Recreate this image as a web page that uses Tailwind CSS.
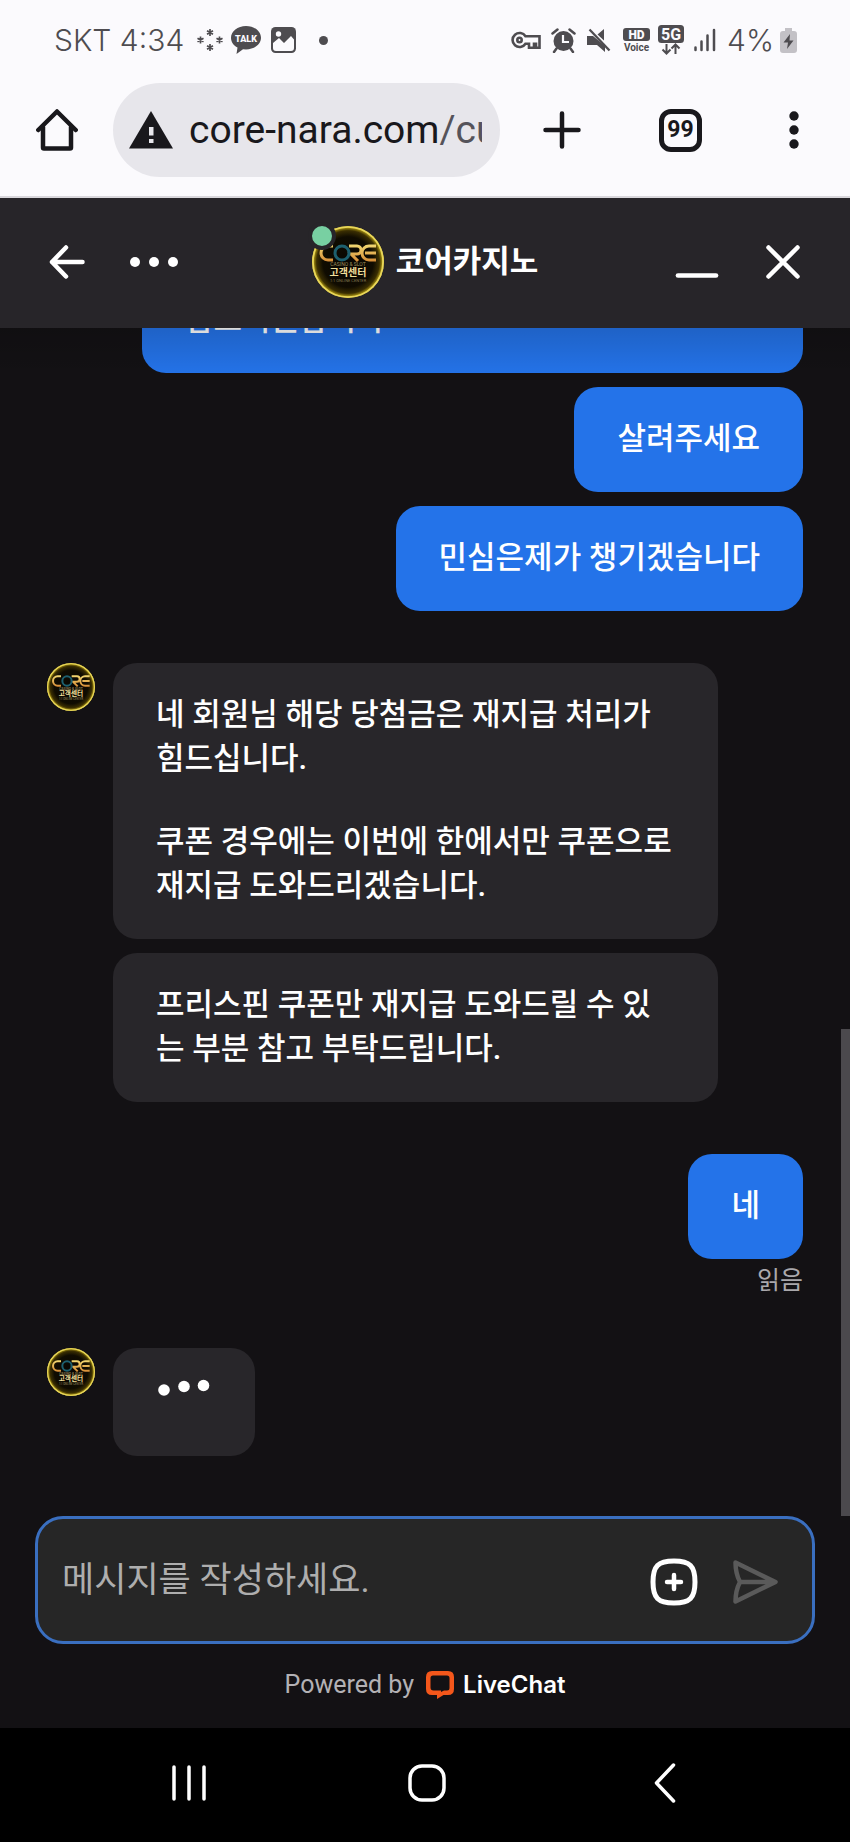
<!DOCTYPE html>
<html lang="ko">
<head>
<meta charset="utf-8">
<meta name="viewport" content="width=device-width, initial-scale=1">
<title>코어카지노 고객센터</title>
<script src="https://cdn.jsdelivr.net/npm/@tailwindcss/browser@4"></script>
</head>
<body class="bg-black font-['Roboto','Noto_Sans_CJK_KR',sans-serif]">

<!-- Shared brand emblem -->
<svg class="absolute h-0 w-0" aria-hidden="true">
  <defs>
    <radialGradient id="glow">
      <stop offset="0" stop-color="#080602"/>
      <stop offset="0.7" stop-color="#100c01"/>
      <stop offset="0.87" stop-color="#3a2e02"/>
      <stop offset="0.94" stop-color="#94800f"/>
      <stop offset="1" stop-color="#f0dc50"/>
    </radialGradient>
    <linearGradient id="gold" gradientUnits="userSpaceOnUse" x1="0" y1="18" x2="0" y2="36">
      <stop offset="0" stop-color="#f4dc74"/>
      <stop offset="1" stop-color="#d58a35"/>
    </linearGradient>
    <symbol id="emblem" viewBox="0 0 72 72">
      <circle cx="36" cy="36" r="36" fill="url(#glow)"/>
      <circle cx="36" cy="36" r="35" fill="none" stroke="#e9d75a" stroke-width="1.6"/>
      <g fill="none" stroke="url(#gold)" stroke-width="3">
        <path d="M21 20H16a7 7 0 0 0 0 14h5"/>
        <path d="M37 20h8a4 4 0 0 1 0 8h-6l7 7"/>
        <path d="M64 20h-7a7 7 0 0 0 0 14h7M53 27h11"/>
      </g>
      <circle cx="30" cy="27" r="7" fill="none" stroke="#1d5f6e" stroke-width="3"/>
      <text x="36" y="40" text-anchor="middle" font-family="Roboto" font-size="5" fill="#9c8c5c">CASINO &amp; SLOT</text>
      <text x="36" y="50" text-anchor="middle" font-family="Noto Sans CJK KR" font-weight="700" font-size="10" fill="#f1df9a">고객센터</text>
      <text x="36" y="56" text-anchor="middle" font-family="Roboto" font-size="4" fill="#83764f">1:1 ONLINE CENTER</text>
    </symbol>
  </defs>
</svg>

<div class="flex h-screen flex-col overflow-hidden bg-[#131114]">

  <!-- Phone status bar -->
  <div class="flex h-20 shrink-0 items-center justify-between bg-[#fbfafd] pr-[53px] pl-[54px] text-[#4e4c50]">
    <div class="flex items-center">
      <span class="font-['Inter'] text-[30px] font-light whitespace-nowrap">SKT 4:34</span>
      <svg class="ml-3 h-7 w-7" viewBox="0 0 28 28" fill="none" stroke="currentColor" stroke-width="1.7" aria-hidden="true">
        <path d="M14 3v7M11 4.800l6 3.400M17 4.800l-6 3.400M14 18v7M11 19.800l6 3.400M17 19.800l-6 3.400M4.500 10.500v7M1.500 12.300l6 3.400M7.500 12.300l-6 3.400M23.500 10.500v7M20.500 12.300l6 3.400M26.500 12.300l-6 3.400"/>
      </svg>
      <svg class="ml-[7px] h-7 w-[30px]" viewBox="0 0 30 28" aria-hidden="true">
        <path fill="currentColor" d="M15 0C6.700 0 0 5.200 0 11.800c0 4.200 2.600 7.700 6.500 9.800L5.500 28l6.500-4.800 3 .2c8.300 0 15-5 15-11.600S23.300 0 15 0z"/>
        <text x="15" y="16" text-anchor="middle" font-family="Roboto" font-weight="900" font-size="9" fill="#fbfafd">TALK</text>
      </svg>
      <svg class="ml-[10px] h-[26px] w-[25px]" viewBox="0 0 25 26" aria-hidden="true">
        <rect width="25" height="26" rx="4.500" fill="currentColor"/>
        <path fill="#fbfafd" d="M2 16l6-5 5 5 7-7 3 3.500V21q0 3-3 3H5q-3 0-3-3z"/>
        <circle cx="7.500" cy="7" r="2.700" fill="#fbfafd"/>
      </svg>
      <span class="ml-[23px] h-[9px] w-[9px] rounded-full bg-current"></span>
    </div>
    <div class="flex items-center">
      <svg class="h-[18px] w-[30px]" viewBox="0 0 30 18" fill="none" stroke="currentColor" stroke-width="2.600" aria-hidden="true">
        <path d="M14.500 5.300A7 7 0 1 0 14.500 12.700H18v4h5v-4h2v4h3.500V5.300z"/><circle cx="8.500" cy="9" r="2.200"/>
      </svg>
      <svg class="ml-[10px] h-[25px] w-[25px]" viewBox="0 0 25 25" aria-hidden="true">
        <circle cx="12.500" cy="13" r="10" fill="currentColor"/>
        <path d="M1.500 5.500l5-4M23.500 5.500l-5-4M5.500 20.500L3 24M19.500 20.500l2.500 3.500" stroke="currentColor" stroke-width="2.500" stroke-linecap="round"/>
        <path d="M12 7v7h6" fill="none" stroke="#fbfafd" stroke-width="2.200"/>
      </svg>
      <svg class="ml-[11px] h-6 w-6" viewBox="0 0 24 24" aria-hidden="true">
        <path fill="currentColor" d="M0 8h6l12 10v6l-8-7H0zM17 1v11.500L10.500 6.500z"/>
        <path d="M2.500 1.500l20 21" stroke="currentColor" stroke-width="2.300"/>
      </svg>
      <svg class="ml-[12px] h-6 w-[27px]" viewBox="0 0 27 24" font-family="Roboto" font-weight="700" text-anchor="middle" aria-hidden="true">
        <rect width="27" height="13" rx="3" fill="currentColor"/>
        <text x="13.500" y="10.500" font-size="12" font-weight="900" fill="#fbfafd">HD</text>
        <text x="13.500" y="22.500" font-size="10" fill="currentColor">Voice</text>
      </svg>
      <svg class="ml-[8px] h-[30px] w-[26px]" viewBox="0 0 26 30" aria-hidden="true">
        <rect width="26" height="18" rx="3.500" fill="currentColor"/>
        <text x="13" y="14.500" text-anchor="middle" font-family="Roboto" font-weight="700" font-size="16" fill="#fbfafd">5G</text>
        <path d="M8.500 19v9M4.500 24.500l4 4 4-4M17.500 29v-9M13.500 23.500l4-4 4 4" fill="none" stroke="currentColor" stroke-width="2"/>
      </svg>
      <svg class="ml-[10px] h-6 w-[22px]" viewBox="0 0 22 24" stroke="currentColor" stroke-width="2.500" stroke-linecap="round" aria-hidden="true">
        <path d="M1.500 19.500v2.500M7.500 13.500v8.500M13.500 7.500v14.500M20 2v20"/>
      </svg>
      <span class="ml-[11px] font-['Inter'] text-[30px] font-light">4%</span>
      <svg class="ml-[6px] h-[25px] w-[17px]" viewBox="0 0 17 25" aria-hidden="true">
        <path fill="#c3c1c6" d="M5 0h7v3h2q3 0 3 3v16q0 3-3 3H3q-3 0-3-3V6q0-3 3-3h2z"/>
        <path fill="currentColor" d="M10 6l-6.500 8.500H8L7 21l6.500-8.500H9.500z"/>
      </svg>
    </div>
  </div>

  <!-- Browser toolbar -->
  <div class="flex h-[118px] shrink-0 items-center border-b-2 border-[#d9d7dc] bg-[#fbfafd] pr-[46px] pb-4 pl-9 text-[#19181c]">
    <button type="button" aria-label="홈">
      <svg class="h-[42px] w-[42px]" viewBox="0 0 42 42" fill="none" stroke="currentColor" stroke-width="4.500" stroke-linejoin="round" stroke-linecap="round" aria-hidden="true">
        <path d="M2.300 21L21 2.500 39.700 21"/><path d="M7 18v20.500q0 1 1 1h26q1 0 1-1V18"/>
      </svg>
    </button>
    <div class="ml-[35px] flex h-[94px] min-w-0 flex-1 items-center overflow-hidden rounded-full bg-[#e7e6eb] pr-[18px] pl-4">
      <svg class="h-[38px] w-11 shrink-0" viewBox="0 0 44 38" aria-hidden="true">
        <path fill="currentColor" d="M22 0l22 37.500H0z"/><path fill="#e7e6eb" d="M20 16h4.500v8.500H20zM20 28h4.500v4H20z"/>
      </svg>
      <div class="ml-4 min-w-0 overflow-hidden text-[39px] whitespace-nowrap">core-nara.com<span class="text-[#55535a]">/custom</span></div>
    </div>
    <button type="button" class="ml-[43px]" aria-label="새 탭">
      <svg class="h-[38px] w-[38px]" viewBox="0 0 38 38" stroke="currentColor" stroke-width="4.500" stroke-linecap="round" aria-hidden="true"><path d="M19 2.500v33M2.500 19h33"/></svg>
    </button>
    <button type="button" class="ml-[78px] flex h-[43px] w-[43px] items-center justify-center rounded-[12px] border-[5px] border-current text-[23px] font-bold" aria-label="탭 99개">99</button>
    <button type="button" class="ml-[82px]" aria-label="메뉴">
      <svg class="h-[38px] w-5" viewBox="0 0 20 38" fill="currentColor" aria-hidden="true"><circle cx="10" cy="5" r="4.700"/><circle cx="10" cy="19" r="4.700"/><circle cx="10" cy="33" r="4.700"/></svg>
    </button>
  </div>

  <!-- Chat header -->
  <header class="grid h-[130px] shrink-0 grid-cols-[1fr_auto_1fr] items-center bg-[#272529] pr-[49px] pb-0.5 pl-[49px] text-white">
    <div class="flex items-center gap-[44px]">
      <button type="button" aria-label="뒤로">
        <svg class="h-9 w-9" viewBox="0 0 36 36" fill="none" stroke="currentColor" stroke-width="4.500" stroke-linecap="round" stroke-linejoin="round" aria-hidden="true"><path d="M17 3.500L3 18l14 14.500M3 18h30.500"/></svg>
      </button>
      <button type="button" aria-label="더 보기">
        <svg class="h-3 w-[50px]" viewBox="0 0 50 12" fill="currentColor" aria-hidden="true"><circle cx="6" cy="6" r="5"/><circle cx="25" cy="6" r="5"/><circle cx="44" cy="6" r="5"/></svg>
      </button>
    </div>
    <div class="flex items-center gap-3">
      <div class="relative">
        <svg class="h-[72px] w-[72px]" role="img" aria-label="CORE 고객센터"><use href="#emblem"/></svg>
        <span class="absolute -top-1 -left-1 h-7 w-7 rounded-full border-4 border-[#272529] bg-[#78d0a2]"></span>
      </div>
      <h1 class="text-[31px] font-bold whitespace-nowrap">코어카지노</h1>
    </div>
    <div class="flex items-center justify-end gap-[46px]">
      <button type="button" aria-label="최소화">
        <svg class="h-9 w-11" viewBox="0 0 44 36" stroke="currentColor" stroke-width="4.700" stroke-linecap="round" aria-hidden="true"><path d="M3 31.500h38"/></svg>
      </button>
      <button type="button" aria-label="닫기">
        <svg class="h-9 w-9" viewBox="0 0 36 36" stroke="currentColor" stroke-width="4.500" stroke-linecap="round" aria-hidden="true"><path d="M3.500 3.500l29 29M32.500 3.500l-29 29"/></svg>
      </button>
    </div>
  </header>

  <!-- Conversation, anchored to its newest message -->
  <main class="relative flex min-h-0 flex-1 flex-col justify-end gap-[52px] overflow-hidden pr-[47px] pb-[60px] pl-[47px] text-[31px] leading-[44px] font-medium text-white">
    <div class="flex flex-col items-end gap-[14px] pl-[95px]">
      <p class="w-full rounded-3xl bg-[#2473e9] px-[43px] pt-[30px] pb-[31px]">회원님들 민심을 생각해서<br>참고지원합니다</p>
      <p class="rounded-3xl bg-[#2473e9] px-[43px] pt-[30px] pb-[31px]">살려주세요</p>
      <p class="rounded-3xl bg-[#2473e9] px-[43px] pt-[30px] pb-[31px]">민심은제가 챙기겠습니다</p>
    </div>

    <div class="flex items-start gap-[18px]">
      <svg class="h-12 w-12 shrink-0" role="img" aria-label="CORE 고객센터"><use href="#emblem"/></svg>
      <div class="flex max-w-[605px] flex-col gap-[14px]">
        <div class="rounded-3xl bg-[#28262a] px-[43px] pt-[30px] pb-[31px]">
          <p>네 회원님 해당 당첨금은 재지급 처리가 힘드십니다.</p>
          <p class="mt-[39px]">쿠폰 경우에는 이번에 한에서만 쿠폰으로 재지급 도와드리겠습니다.</p>
        </div>
        <p class="rounded-3xl bg-[#28262a] px-[43px] pt-[30px] pb-[31px]">프리스핀 쿠폰만 재지급 도와드릴 수 있는 부분 참고 부탁드립니다.</p>
      </div>
    </div>

    <div class="flex flex-col items-end">
      <p class="rounded-3xl bg-[#2473e9] px-[43px] pt-[30px] pb-[31px]">네</p>
      <p class="pt-[7px] text-[25px] leading-[30px] font-normal text-[#aaa8ac]">읽음</p>
    </div>

    <div class="flex items-start gap-[18px]">
      <svg class="h-12 w-12 shrink-0" role="img" aria-label="CORE 고객센터"><use href="#emblem"/></svg>
      <div class="h-[108px] rounded-3xl bg-[#28262a] px-[43px] pt-[30px]" role="status" aria-label="입력 중">
        <svg class="h-5 w-14" viewBox="0 0 56 20" fill="currentColor" aria-hidden="true"><circle cx="8" cy="12" r="5.800"/><circle cx="28" cy="8.500" r="5.800"/><circle cx="47.500" cy="7.500" r="5.800"/></svg>
      </div>
    </div>

    <div class="absolute inset-x-0 top-0 h-12 bg-linear-to-b from-black/15 to-transparent"></div>
    <div class="absolute right-0 bottom-0 h-[41%] w-[9px] bg-[#4b494d]"></div>
  </main>

  <!-- Message composer -->
  <form class="mx-[35px] flex h-32 shrink-0 items-center rounded-[28px] border-[3px] border-[#3a6fc0] bg-[#262626] pt-[3px] pr-[34px] pl-6">
    <input type="text" aria-label="메시지" placeholder="메시지를 작성하세요." class="min-w-0 flex-1 bg-transparent text-[35px] text-white outline-none placeholder:text-[#aeaeae]">
    <button type="button" class="text-white" aria-label="첨부">
      <svg class="h-12 w-12" viewBox="0 0 48 48" fill="none" stroke="currentColor" stroke-linecap="round" aria-hidden="true">
        <path stroke-width="5" d="M24 3C8 3 3 8 3 24s5 21 21 21 21-5 21-21S40 3 24 3z"/><path stroke-width="4.500" d="M24 17v14M17 24h14"/>
      </svg>
    </button>
    <button type="submit" class="ml-[34px] text-[#5a5a5a]" aria-label="보내기">
      <svg class="h-11 w-[46px]" viewBox="0 0 46 44" fill="none" stroke="currentColor" stroke-width="4.500" stroke-linejoin="round" stroke-linecap="round" aria-hidden="true">
        <path d="M3.500 2.500L43.500 22 3.500 41.500q0-11 4.500-19.500Q3.500 13.500 3.500 2.500zM8 22h34"/>
      </svg>
    </button>
  </form>

  <footer class="flex h-[84px] shrink-0 items-center justify-center pb-0.5 text-[#b3b1b5]">
    <span class="text-[25px]">Powered by</span>
    <a href="#" class="ml-3 flex items-center gap-[9px] text-[24px] text-white">
      <svg class="h-7 w-7" viewBox="0 0 28 28" aria-hidden="true">
        <path fill="#f4571b" fill-rule="evenodd" d="M6 0h16Q28 0 28 6v12q0 6-6 6h-4.500L11 28v-4H6Q0 24 0 18V6Q0 0 6 0zM7 4.500Q4.500 4.500 4.500 7v9.500q0 3 3 3H15v1.500l3-1.500h3q2.500 0 2.500-2.500V7q0-2.500-2.500-2.500z"/>
      </svg>
      <span class="font-['Inter'] font-semibold">LiveChat</span>
    </a>
  </footer>

  <!-- Phone navigation bar -->
  <nav class="flex h-[114px] shrink-0 items-center justify-between bg-black pr-[163px] pb-1 pl-[167px] text-white">
    <button type="button" class="flex w-11 justify-center" aria-label="최근 앱">
      <svg class="h-9 w-[34px]" viewBox="0 0 34 36" stroke="currentColor" stroke-width="3.500" stroke-linecap="round" aria-hidden="true"><path d="M2 2v32M17 2v32M32 2v32"/></svg>
    </button>
    <button type="button" class="flex w-11 justify-center" aria-label="홈 화면">
      <svg class="h-[38px] w-[38px]" viewBox="0 0 38 38" fill="none" stroke="currentColor" stroke-width="3.500" aria-hidden="true"><rect x="2" y="2" width="34" height="34" rx="12"/></svg>
    </button>
    <button type="button" class="flex w-11 justify-center" aria-label="뒤로 가기">
      <svg class="h-10 w-[22px]" viewBox="0 0 22 40" fill="none" stroke="currentColor" stroke-width="3.500" stroke-linecap="round" stroke-linejoin="round" aria-hidden="true"><path d="M19.500 2L2.500 20l17 18"/></svg>
    </button>
  </nav>
</div>
</body>
</html>
